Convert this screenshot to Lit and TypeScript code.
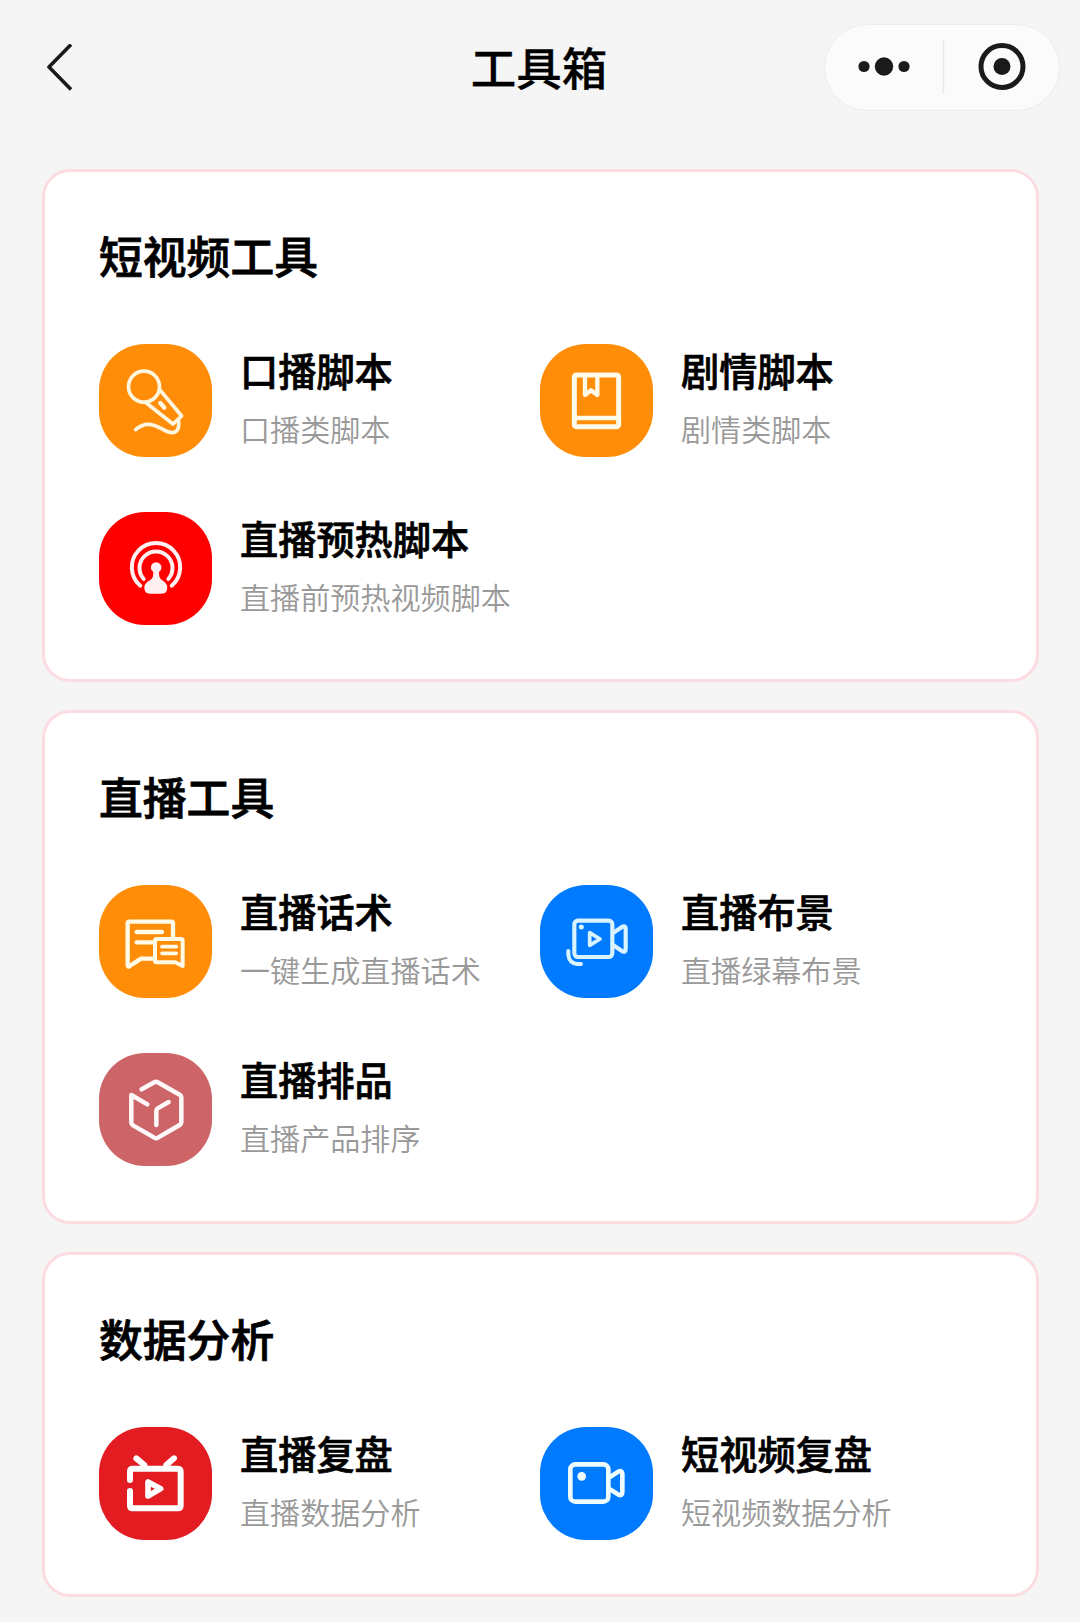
import { LitElement, html, css, svg, TemplateResult } from "lit";
import { customElement, property } from "lit/decorators.js";
import { styleMap } from "lit/directives/style-map.js";

interface Tool {
  name: string;
  desc: string;
  icon: string;
  color: string;
}

interface Section {
  title: string;
  tools: Tool[];
}

const SECTIONS: Section[] = [
  {
    title: "短视频工具",
    tools: [
      { name: "口播脚本", desc: "口播类脚本", icon: "mic", color: "#ff8d08" },
      { name: "剧情脚本", desc: "剧情类脚本", icon: "book", color: "#ff8d08" },
      { name: "直播预热脚本", desc: "直播前预热视频脚本", icon: "broadcast", color: "#ff0000" },
    ],
  },
  {
    title: "直播工具",
    tools: [
      { name: "直播话术", desc: "一键生成直播话术", icon: "chat", color: "#ff8d08" },
      { name: "直播布景", desc: "直播绿幕布景", icon: "scene", color: "#007aff" },
      { name: "直播排品", desc: "直播产品排序", icon: "box", color: "#cd6468" },
    ],
  },
  {
    title: "数据分析",
    tools: [
      { name: "直播复盘", desc: "直播数据分析", icon: "tv", color: "#e21c20" },
      { name: "短视频复盘", desc: "短视频数据分析", icon: "camera", color: "#007aff" },
    ],
  },
];

interface Glyph {
  box: string;
  tint: string;
  width: number;
  body: TemplateResult;
}

const GLYPHS: Record<string, Glyph> = {
  mic: {
    box: "27 27 339 339",
    tint: "#fff6e0",
    width: 11,
    body: svg`
      <circle cx="162" cy="155" r="46.500"/>
      <path d="M209 164L275 243L249 267L169 204"/>
      <path d="M211 204L223 218" stroke-width="13"/>
      <path d="M265 254C269 277 264 293 246 293C222 292 206 268 175 268C158 268 147 275 137 284"/>`,
  },
  book: {
    box: "31 27 339 339",
    tint: "#fffbe8",
    width: 15,
    body: svg`
      <rect x="134" y="120" width="133" height="155" rx="6"/>
      <path d="M134 249H267" stroke-width="14"/>
      <path d="M166 122V180L184 166L203 180V122" stroke-width="13"/>`,
  },
  broadcast: {
    box: "27 27 339 339",
    tint: "#fff1f1",
    width: 12,
    body: svg`
      <path d="M151 248A72.500 72.500 0 1 1 245 248"/>
      <path d="M161 228A49.500 49.500 0 1 1 235 228"/>
      <path d="M190 207A16 16 0 1 1 207 207C207 224 210 228 220 234C230 240 234 249 231 260C229 269 223 272 213 272H182C172 272 166 269 164 260C161 249 166 240 176 234C187 228 190 224 190 207Z" fill="#fff1f1" stroke="none"/>`,
  },
  chat: {
    box: "27 27 339 339",
    tint: "#fffbe8",
    width: 13,
    body: svg`
      <path d="M249 184V142Q249 137 244 137H119Q113 137 113 143V268Q113 275 119 270L153 248H192"/>
      <path d="M140 168H216M140 199H190"/>
      <path d="M200 189H273Q278 189 278 194V270L256 259H200Q195 259 195 254V194Q195 189 200 189Z" stroke-width="12"/>
      <path d="M216 212H259M216 232H259" stroke-width="11"/>`,
  },
  scene: {
    box: "31 27 339 339",
    tint: "#d9f3ff",
    width: 12.5,
    body: svg`
      <rect x="134" y="134" width="114" height="109" rx="11"/>
      <path d="M180 170V208L211 189Z" stroke-width="11"/>
      <circle cx="155" cy="153" r="7.500" fill="#d9f3ff" stroke="none"/>
      <path d="M250 171L278 152Q288 148 288 158V220Q288 230 278 226L250 207"/>
      <path d="M116 225V236Q118 262 143 264H154" stroke-width="12"/>`,
  },
  box: {
    box: "27 27 339 339",
    tint: "#fff8f8",
    width: 13.5,
    body: svg`
      <path d="M155 136L193 115Q198 112 203 115L269 152Q274 155 274 160V235Q274 240 269 243L204 281Q198 284 193 281L129 244Q124 241 124 236V153L172 181"/>
      <path d="M236 174L203 193Q199 196 199 201V243"/>`,
  },
  tv: {
    box: "27 27 339 339",
    tint: "#ffffff",
    width: 18,
    body: svg`
      <path d="M120 186V160Q120 152 128 152H263Q272 152 272 161V263Q272 271 263 271H128Q120 271 120 263V219"/>
      <path d="M139 121L163 141M252 121L229 141"/>
      <path d="M174 192V234L212 212Z" stroke-width="17"/>`,
  },
  camera: {
    box: "31 27 339 339",
    tint: "#effcff",
    width: 14,
    body: svg`
      <rect x="122" y="139" width="114" height="112" rx="15"/>
      <circle cx="156" cy="175" r="13" fill="#effcff" stroke="none"/>
      <path d="M243 176L266 161Q278 156 278 168V222Q278 235 266 230L243 215"/>`,
  },
};

@customElement("tool-item")
export class ToolItem extends LitElement {
  @property({ attribute: false }) tool!: Tool;

  static styles = css`
    :host {
      display: flex;
      height: 113px;
      gap: 28px;
    }
    .tile {
      flex: none;
      width: 113px;
      height: 113px;
      border-radius: 46px;
    }
    .glyph {
      display: block;
      width: 113px;
      height: 113px;
      fill: none;
      stroke-linecap: round;
      stroke-linejoin: round;
    }
    .text {
      display: flex;
      flex-direction: column;
      white-space: nowrap;
    }
    .name {
      margin-top: -2px;
      font-size: 38.2px;
      line-height: 56px;
      font-weight: 500;
      -webkit-text-stroke: 0.7px #000;
      color: #000;
    }
    .desc {
      margin-top: 8px;
      font-size: 30.1px;
      line-height: 44px;
      font-weight: 350;
      color: #999;
    }
  `;

  render() {
    const g = GLYPHS[this.tool.icon];
    return html`
      <div class="tile" style=${styleMap({ background: this.tool.color })}>
        <svg class="glyph" viewBox=${g.box} stroke=${g.tint} stroke-width=${g.width}>${g.body}</svg>
      </div>
      <div class="text">
        <div class="name">${this.tool.name}</div>
        <div class="desc">${this.tool.desc}</div>
      </div>
    `;
  }
}

@customElement("app-root")
export class AppRoot extends LitElement {
  static styles = css`
    :host {
      display: block;
      box-sizing: border-box;
      min-height: 1622px;
      background: #f5f5f5;
      font-family: "Noto Sans CJK SC", sans-serif;
      color: #000;
    }
    .bar {
      display: grid;
      grid-template-columns: 1fr auto 1fr;
      align-items: center;
      box-sizing: border-box;
      height: 169px;
      padding: 24px 20px 58px 45px;
    }
    .back {
      display: block;
      width: 28px;
      height: 48px;
    }
    .heading {
      margin: 0 0 3px;
      padding-right: 27px;
      font-size: 45.5px;
      line-height: 66px;
      font-weight: 500;
      -webkit-text-stroke: 0.3px #000;
    }
    .capsule {
      justify-self: end;
      display: flex;
      align-items: center;
      box-sizing: border-box;
      width: 236px;
      height: 87px;
      border: 1px solid #ececec;
      border-radius: 44px;
      background: #fbfbfb;
    }
    .controls {
      display: block;
      width: 234px;
      height: 85px;
    }
    .list {
      display: flex;
      flex-direction: column;
      gap: 28px;
      padding: 0 41.500px 0;
    }
    .card {
      box-sizing: border-box;
      padding: 53px 54.500px 54.300px;
      border: 3px solid #fcdce1;
      border-radius: 28px;
      background: #fff;
    }
    .title {
      margin: 0 0 58.500px;
      font-size: 43.8px;
      line-height: 60.500px;
      font-weight: 500;
      -webkit-text-stroke: 0.8px #000;
    }
    .grid {
      display: grid;
      grid-template-columns: 441px 1fr;
      row-gap: 55px;
    }
  `;

  render() {
    return html`
      <header class="bar">
        <svg class="back" viewBox="0 1 28 48" fill="none" stroke="#1a1a1a" stroke-width="3.600" stroke-linejoin="round">
          <path d="M26 1.500L4 24L26 46.500"/>
        </svg>
        <h1 class="heading">工具箱</h1>
        <div class="capsule">
          <svg class="controls" viewBox="825 25 234 85">
            <g fill="#1a1a1a">
              <circle cx="864" cy="66.500" r="5.600"/>
              <circle cx="884" cy="66.500" r="9.200"/>
              <circle cx="904" cy="66.500" r="5.600"/>
              <circle cx="1002" cy="66.500" r="8.500"/>
            </g>
            <path d="M943.500 40V94" stroke="#e9e9e9" stroke-width="1.500"/>
            <circle cx="1002" cy="66.500" r="21" fill="none" stroke="#1a1a1a" stroke-width="5"/>
          </svg>
        </div>
      </header>
      <main class="list">
        ${SECTIONS.map(
          (s) => html`
            <section class="card">
              <h2 class="title">${s.title}</h2>
              <div class="grid">${s.tools.map((t) => html`<tool-item .tool=${t}></tool-item>`)}</div>
            </section>
          `
        )}
      </main>
    `;
  }
}
